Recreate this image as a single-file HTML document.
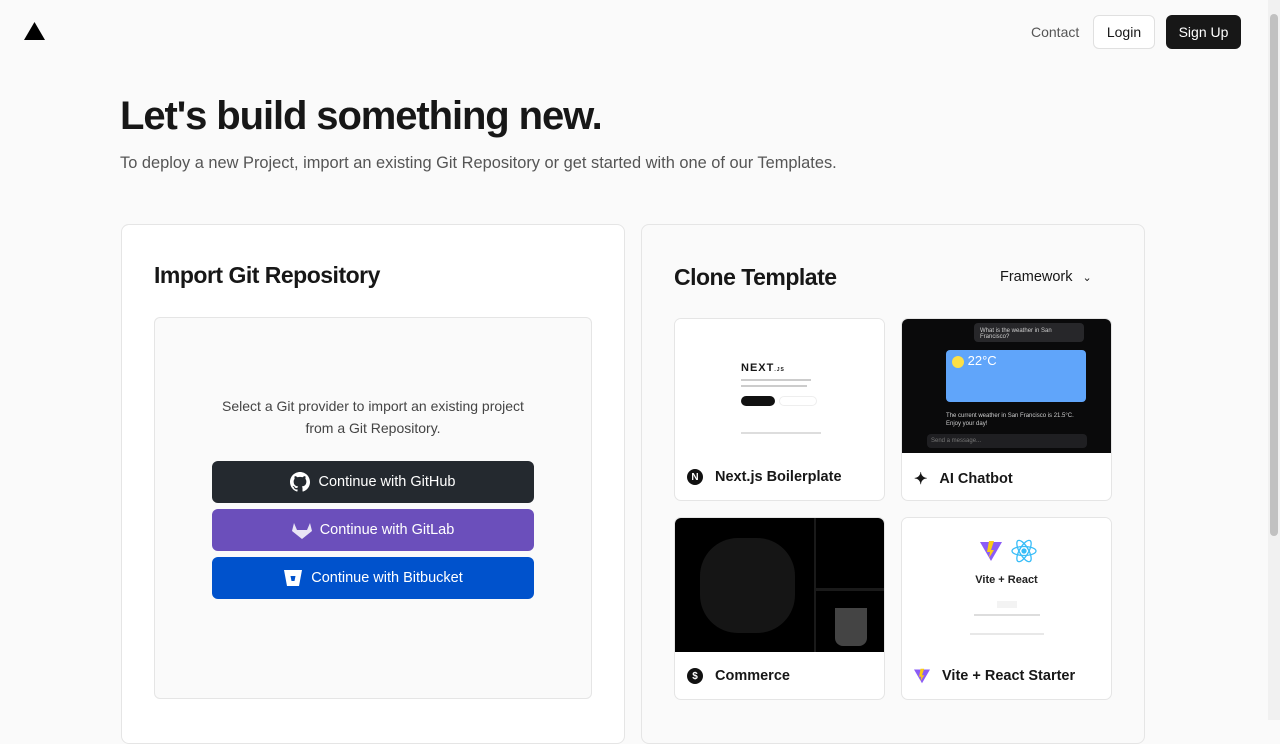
<!DOCTYPE html>
<html><head><style>
*{box-sizing:border-box;margin:0;padding:0}
body{width:1280px;height:720px;overflow:hidden;background:#fafafa;font-family:"Liberation Sans",sans-serif;color:#171717;position:relative}
.a{position:absolute}
.btn{position:absolute;left:212px;width:322px;height:42px;border-radius:6px;color:#fff;font-size:14.5px;display:flex;align-items:center;justify-content:center;gap:8px}
.card{position:absolute;width:211px;height:183px;background:#fff;border:1px solid #e5e5e5;border-radius:7px;overflow:hidden}
.card .img{height:134px}
.card .lbl{position:absolute;left:12px;top:150px;font-size:14.5px;font-weight:bold;display:flex;align-items:center;gap:12px}
.ic{width:16px;height:16px;border-radius:50%;background:#111;color:#fff;font-size:10px;display:flex;align-items:center;justify-content:center}
</style></head><body>
<svg class="a" style="left:24px;top:22px" width="21" height="18"><polygon points="10.5,0 21,18 0,18" fill="#000"/></svg>
<div class="a" style="left:1031px;top:24px;font-size:14px;color:#555">Contact</div>
<div class="a" style="left:1093px;top:15px;width:62px;height:34px;border:1px solid #e0e0e0;border-radius:6px;background:#fff;font-size:14px;display:flex;align-items:center;justify-content:center;font-weight:500">Login</div>
<div class="a" style="left:1166px;top:15px;width:75px;height:34px;border-radius:6px;background:#171717;color:#fff;font-size:14px;display:flex;align-items:center;justify-content:center">Sign Up</div>
<div class="a" style="left:1268px;top:0;width:12px;height:720px;background:#f1f1f1"></div>
<div class="a" style="left:1270px;top:14px;width:8px;height:522px;background:#c1c1c1;border-radius:4px"></div>
<div class="a" style="left:120px;top:94px;font-size:40px;font-weight:bold;letter-spacing:-1.1px">Let's build something new.</div>
<div class="a" style="left:120px;top:154px;font-size:16.4px;color:#555">To deploy a new Project, import an existing Git Repository or get started with one of our Templates.</div>

<div class="a" style="left:121px;top:224px;width:504px;height:520px;background:#fff;border:1px solid #e5e5e5;border-radius:8px"></div>
<div class="a" style="left:154px;top:262px;font-size:23px;font-weight:bold;letter-spacing:-0.5px">Import Git Repository</div>
<div class="a" style="left:154px;top:317px;width:438px;height:382px;border:1px solid #e5e5e5;border-radius:6px;background:#fafafa"></div>
<div class="a" style="left:154px;top:395px;width:438px;text-align:center;font-size:14px;line-height:22px;color:#444">Select a Git provider to import an existing project<br>from a Git Repository.</div>
<div class="btn" style="top:461px;background:#24292f"><svg width="20" height="20" viewBox="0 0 16 16"><path fill="#fff" d="M8 0C3.58 0 0 3.580 0 8c0 3.54 2.29 6.53 5.47 7.59.4.07.55-.17.55-.38v-1.34c-2.230.48-2.7-1.07-2.7-1.07-.36-.92-.89-1.17-.89-1.17-.73-.5.05-.49.05-.49.8.06 1.23.83 1.23.83.71 1.22 1.87.87 2.33.66.07-.52.28-.87.5-1.070-1.78-.2-3.64-.89-3.64-3.95 0-.87.31-1.59.82-2.15-.08-.2-.36-1.02.08-2.12 0 0 .67-.21 2.2.82a7.6 7.6 0 014 0c1.53-1.04 2.2-.82 2.2-.82.44 1.1.16 1.92.08 2.12.51.56.82 1.27.82 2.15 0 3.07-1.87 3.75-3.65 3.95.29.25.54.73.54 1.48v2.2c0 .21.15.46.55.38A8 8 0 0016 8c0-4.42-3.58-8-8-8z"/></svg>Continue with GitHub</div>
<div class="btn" style="top:509px;background:#6b4fbb"><svg width="20" height="18" viewBox="0 0 20 18"><path fill="#fff" opacity=".85" d="M10 18L0 10 2 2l3 7h10l3-7 2 8z"/></svg>Continue with GitLab</div>
<div class="btn" style="top:557px;background:#0052cc"><svg width="20" height="18" viewBox="0 0 20 18"><path fill="#fff" d="M1 1h18l-3 16H4z"/><path fill="#0052cc" d="M7.5 7h5l-1 5h-3z"/></svg>Continue with Bitbucket</div>

<div class="a" style="left:641px;top:224px;width:504px;height:520px;background:#fafafa;border:1px solid #e5e5e5;border-radius:8px"></div>
<div class="a" style="left:674px;top:264px;font-size:23px;font-weight:bold;letter-spacing:-0.5px">Clone Template</div>
<div class="a" style="left:1000px;top:269px;font-size:14.5px">Framework <span style="font-size:11px;margin-left:6px">&#8964;</span></div>

<div class="card" style="left:674px;top:318px"><div class="img" style="background:#fff;position:relative">
<div class="a" style="left:66px;top:43px;font-size:11px;font-weight:bold;letter-spacing:1px">NEXT<span style="font-size:5px">.JS</span></div>
<div class="a" style="left:66px;top:60px;width:70px;height:2px;background:#ccc"></div>
<div class="a" style="left:66px;top:66px;width:66px;height:2px;background:#ccc"></div>
<div class="a" style="left:66px;top:77px;width:34px;height:10px;border-radius:5px;background:#111"></div>
<div class="a" style="left:104px;top:77px;width:38px;height:10px;border-radius:5px;border:1px solid #eee"></div>
<div class="a" style="left:66px;top:113px;width:80px;height:2px;background:#ddd"></div>
</div><div class="lbl"><span class="ic">N</span>Next.js Boilerplate</div></div>

<div class="card" style="left:901px;top:318px"><div class="img" style="background:#0a0a0b;position:relative">
<div class="a" style="left:72px;top:4px;width:110px;height:19px;border-radius:4px;background:#27272a;color:#ccc;font-size:6px;padding:5px 6px">What is the weather in San Francisco?</div>
<div class="a" style="left:44px;top:31px;width:140px;height:52px;border-radius:4px;background:#60a5fa;color:#fff;font-size:13px;padding:3px 6px"><span style="display:inline-block;width:12px;height:12px;border-radius:50%;background:#fde047;vertical-align:middle"></span> 22°C</div>
<div class="a" style="left:44px;top:93px;width:140px;color:#ccc;font-size:6px;line-height:8px">The current weather in San Francisco is 21.5°C. Enjoy your day!</div>
<div class="a" style="left:25px;top:115px;width:160px;height:14px;border-radius:4px;background:#1f1f22;color:#777;font-size:6px;padding:4px">Send a message...</div>
</div><div class="lbl"><span style="font-size:16px">✦</span>AI Chatbot</div></div>

<div class="card" style="left:674px;top:517px"><div class="img" style="background:#000;position:relative">
<div class="a" style="left:139px;top:0;width:2px;height:134px;background:#1a1a1a"></div>
<div class="a" style="left:141px;top:70px;width:70px;height:3px;background:#1a1a1a"></div>
<div class="a" style="left:25px;top:20px;width:95px;height:95px;border-radius:40%;background:#151515"></div>
<div class="a" style="left:160px;top:90px;width:32px;height:38px;border-radius:0 0 8px 8px;background:#444"></div>
</div><div class="lbl"><span class="ic">$</span>Commerce</div></div>

<div class="card" style="left:901px;top:517px"><div class="img" style="background:#fff;position:relative">
<svg class="a" style="left:78px;top:22px" width="22" height="22" viewBox="0 0 22 22"><path d="M0 2h22L11 21z" fill="#8b5cf6"/><path d="M9 1h5l-3 9h3l-5 8 1-6H7z" fill="#facc15"/></svg>
<svg class="a" style="left:109px;top:21px" width="26" height="24" viewBox="-13 -12 26 24" fill="none" stroke="#38bdf8" stroke-width="1.3"><ellipse rx="12" ry="4.5"/><ellipse rx="12" ry="4.5" transform="rotate(60)"/><ellipse rx="12" ry="4.5" transform="rotate(120)"/><circle r="2" fill="#38bdf8"/></svg>
<div class="a" style="left:0;top:56px;width:209px;text-align:center;font-size:11px;font-weight:bold;color:#222">Vite + React</div>
<div class="a" style="left:95px;top:83px;width:20px;height:7px;background:#f3f3f3"></div>
<div class="a" style="left:72px;top:96px;width:66px;height:2px;background:#ddd"></div>
<div class="a" style="left:68px;top:115px;width:74px;height:2px;background:#e8e8e8"></div>
</div><div class="lbl"><svg width="16" height="16" viewBox="0 0 22 22"><path d="M0 2h22L11 21z" fill="#8b5cf6"/><path d="M9 1h5l-3 9h3l-5 8 1-6H7z" fill="#facc15"/></svg>Vite + React Starter</div></div>
</body></html>
